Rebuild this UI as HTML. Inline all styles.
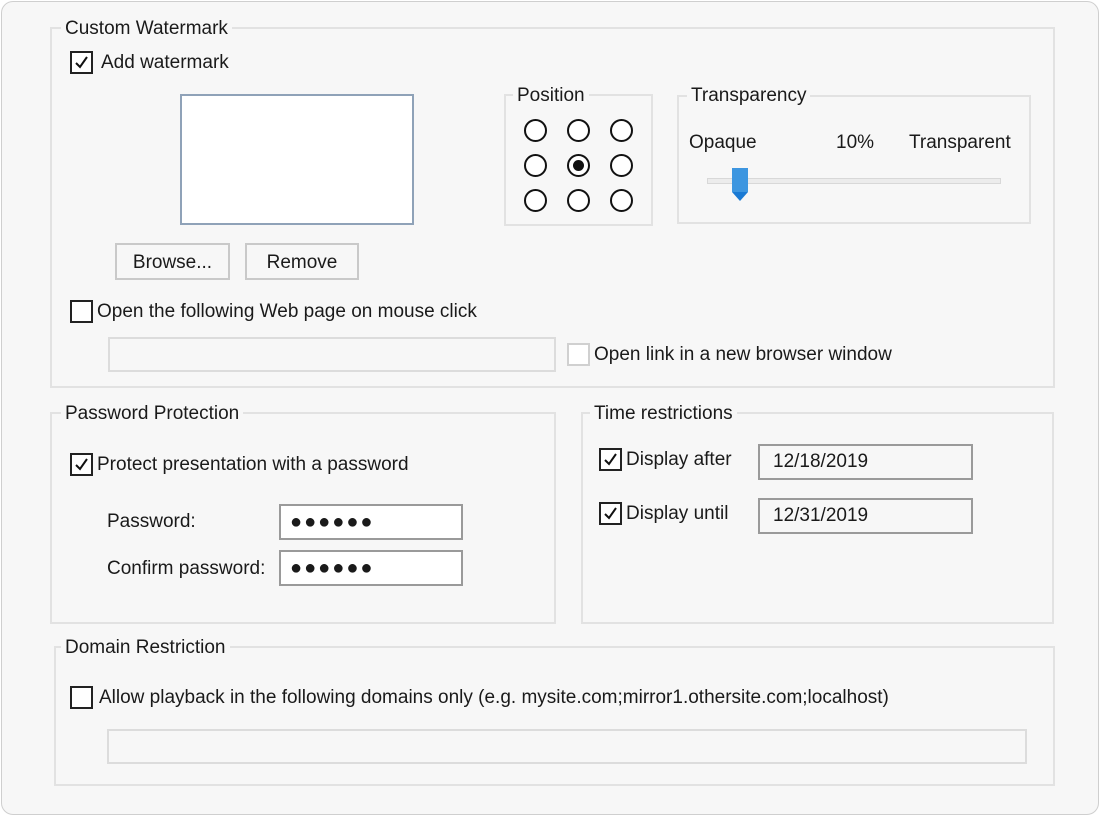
<!DOCTYPE html><html><head><style>
body{margin:0;width:1100px;height:816px;background:#fff;font-family:"Liberation Sans",sans-serif;color:#1a1a1a;}
.frame{position:absolute;left:1px;top:1px;width:1096px;height:812px;border:1px solid #cfcfcf;border-radius:12px;background:#f7f7f7;}
.a{position:absolute}
.g{position:absolute;border:2px solid #e2e2e2}
.t{position:absolute;font-size:19px;line-height:20px;white-space:nowrap;background:#f7f7f7;padding:0 4px;}
.n{position:absolute;font-size:19px;line-height:20px;white-space:nowrap}
.cb{position:absolute;width:19px;height:19px;border:2px solid #222;background:#fff}
.cb.l{border-color:#d0d0d0}
.cb svg{position:absolute;left:1px;top:1px}
.r{position:absolute;width:19px;height:19px;border:2px solid #111;border-radius:50%;background:#fff}
.btn{position:absolute;border:2px solid #c9c9c9;background:#f7f7f7;font-size:19px;text-align:center;box-sizing:border-box}
.in{position:absolute;border:2px solid #9a9a9a;background:#fff;box-sizing:border-box;font-size:19px}
.in2{position:absolute;border:2px solid #dcdcdc;background:#f7f7f7;box-sizing:border-box}
.pw{font-size:20px;letter-spacing:2px}
</style></head><body><div class="frame"></div>
<div class="g" style="left:50px;top:27px;width:1001px;height:357px"></div>
<div class="t" style="left:61px;top:19px">Custom Watermark</div>
<div class="cb" style="left:70px;top:51px"><svg width="17" height="17"><path d="M3 9 L7 13 L14 3" stroke="#111" stroke-width="2" fill="none"/></svg></div>
<div class="n" style="left:101px;top:53px">Add watermark</div>
<div class="a" style="left:180px;top:94px;width:230px;height:127px;border:2px solid #8fa2b8;background:#fff"></div>
<div class="btn" style="left:115px;top:243px;width:115px;height:37px;line-height:35px">Browse...</div>
<div class="btn" style="left:245px;top:243px;width:114px;height:37px;line-height:35px">Remove</div>
<div class="g" style="left:504px;top:94px;width:145px;height:128px"></div>
<div class="t" style="left:513px;top:86px">Position</div>
<div class="r" style="left:524px;top:119px"></div><div class="r" style="left:567px;top:119px"></div><div class="r" style="left:610px;top:119px"></div>
<div class="r" style="left:524px;top:154px"></div><div class="r" style="left:567px;top:154px"><div class="a" style="left:4px;top:4px;width:11px;height:11px;border-radius:50%;background:#111"></div></div><div class="r" style="left:610px;top:154px"></div>
<div class="r" style="left:524px;top:189px"></div><div class="r" style="left:567px;top:189px"></div><div class="r" style="left:610px;top:189px"></div>
<div class="g" style="left:677px;top:95px;width:350px;height:125px"></div>
<div class="t" style="left:687px;top:86px">Transparency</div>
<div class="n" style="left:689px;top:133px">Opaque</div>
<div class="n" style="left:836px;top:133px">10%</div>
<div class="n" style="left:909px;top:133px">Transparent</div>
<div class="a" style="left:707px;top:178px;width:292px;height:4px;border:1px solid #d8d8d8;background:#ececec"></div>
<div class="a" style="left:732px;top:168px;width:16px;height:24px;background:#3d96e0"></div>
<div class="a" style="left:732px;top:192px;width:0;height:0;border-left:8px solid transparent;border-right:8px solid transparent;border-top:9px solid #1a7ad4"></div>
<div class="cb" style="left:70px;top:300px"></div>
<div class="n" style="left:97px;top:302px">Open the following Web page on mouse click</div>
<div class="in2" style="left:108px;top:337px;width:448px;height:35px"></div>
<div class="cb l" style="left:567px;top:343px"></div>
<div class="n" style="left:594px;top:345px">Open link in a new browser window</div>
<div class="g" style="left:50px;top:412px;width:502px;height:208px"></div>
<div class="t" style="left:61px;top:404px">Password Protection</div>
<div class="cb" style="left:70px;top:453px"><svg width="17" height="17"><path d="M3 9 L7 13 L14 3" stroke="#111" stroke-width="2" fill="none"/></svg></div>
<div class="n" style="left:97px;top:455px">Protect presentation with a password</div>
<div class="n" style="left:107px;top:512px">Password:</div>
<div class="n" style="left:107px;top:559px">Confirm password:</div>
<div class="in pw" style="left:279px;top:504px;width:184px;height:36px;line-height:32px;padding-left:9px">●●●●●●</div>
<div class="in pw" style="left:279px;top:550px;width:184px;height:36px;line-height:32px;padding-left:9px">●●●●●●</div>
<div class="g" style="left:581px;top:412px;width:469px;height:208px"></div>
<div class="t" style="left:590px;top:404px">Time restrictions</div>
<div class="cb" style="left:599px;top:448px"><svg width="17" height="17"><path d="M3 9 L7 13 L14 3" stroke="#111" stroke-width="2" fill="none"/></svg></div>
<div class="n" style="left:626px;top:450px">Display after</div>
<div class="cb" style="left:599px;top:502px"><svg width="17" height="17"><path d="M3 9 L7 13 L14 3" stroke="#111" stroke-width="2" fill="none"/></svg></div>
<div class="n" style="left:626px;top:504px">Display until</div>
<div class="in" style="left:758px;top:444px;width:215px;height:36px;line-height:32px;padding-left:13px;background:#f7f7f7">12/18/2019</div>
<div class="in" style="left:758px;top:498px;width:215px;height:36px;line-height:32px;padding-left:13px;background:#f7f7f7">12/31/2019</div>
<div class="g" style="left:54px;top:646px;width:997px;height:136px"></div>
<div class="t" style="left:61px;top:638px">Domain Restriction</div>
<div class="cb" style="left:70px;top:686px"></div>
<div class="n" style="left:99px;top:688px">Allow playback in the following domains only (e.g. mysite.com;mirror1.othersite.com;localhost)</div>
<div class="in2" style="left:107px;top:729px;width:920px;height:35px"></div>
</body></html>
